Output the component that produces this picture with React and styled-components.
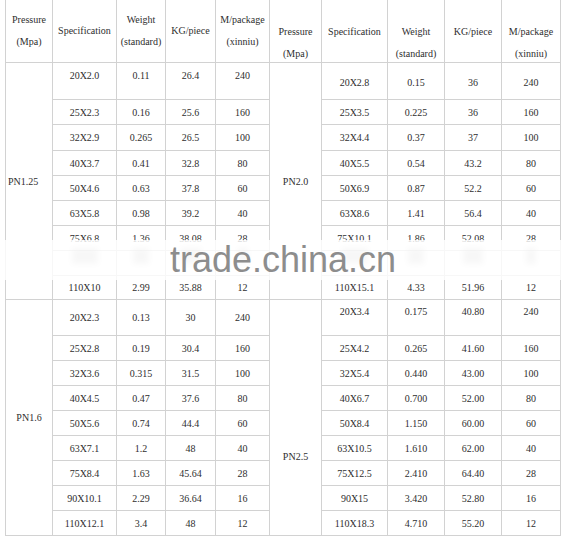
import React from "react";
import styled, { createGlobalStyle } from "styled-components";

const GlobalStyle = createGlobalStyle`
  html, body {
    margin: 0;
    padding: 0;
    background: #ffffff;
  }
  body {
    font-family: "Liberation Serif", "Times New Roman", serif;
  }
`;

const LINE = "#d2d2d2";

const Page = styled.div`
  position: relative;
  display: flex;
  padding-left: 5px;
  width: 565px;
  height: 546px;
  box-sizing: border-box;
  overflow: hidden;
  background: #ffffff;
`;

const Sheet = styled.div`
  display: grid;
  grid-template-columns: ${(p) => p.$cols};
  grid-template-rows: 63px 37px 25px 26px repeat(5, 25px) 24px 36px repeat(8, 25px);
  border-left: ${(p) => (p.$edge ? `1px solid ${LINE}` : "none")};
  align-self: flex-start;
`;

const Cell = styled.div`
  display: flex;
  align-items: center;
  justify-content: center;
  text-align: center;
  box-sizing: border-box;
  border-right: 1px solid ${LINE};
  border-bottom: 1px solid ${LINE};
  font-size: 10px;
  color: #2e2e2e;
  padding-top: ${(p) => p.$down || 0}px;
  padding-bottom: ${(p) => p.$up || 0}px;
  white-space: nowrap;
`;

const HeadCell = styled(Cell)`
  flex-direction: column;
  justify-content: ${(p) => (p.$top ? "flex-start" : "center")};
  padding-top: ${(p) => (p.$top ? 21 : 0)}px;
  line-height: 22px;
`;

const PressureCell = styled(Cell)`
  grid-row: span 9;
  justify-content: ${(p) => (p.$left ? "flex-start" : "center")};
  padding-left: ${(p) => (p.$left ? 2 : 0)}px;
`;

// blurred remains of the row hidden under the watermark band
const Smudge = styled.span`
  display: block;
  width: ${(p) => p.$w}px;
  height: 16px;
  margin-top: -14px;
  background: #9a9a9a;
  opacity: 0.45;
  filter: blur(3px);
`;

const Watermark = styled.div`
  position: absolute;
  top: 240px;
  left: 0;
  right: 0;
  height: 40px;
  background: rgba(255, 255, 255, 0.82);
  padding-left: 170px;
  font-family: "Liberation Sans", Arial, sans-serif;
  font-size: 36px;
  line-height: 40px;
  color: #8d8d8d;
`;

const headers = [
  ["Pressure", "(Mpa)"],
  ["Specification"],
  ["Weight", "(standard)"],
  ["KG/piece"],
  ["M/package", "(xinniu)"],
];

const HIDDEN = null;

const leftGroups = [
  {
    label: "PN1.25",
    left: true,
    rows: [
      ["20X2.0", "0.11", "26.4", "240"],
      ["25X2.3", "0.16", "25.6", "160"],
      ["32X2.9", "0.265", "26.5", "100"],
      ["40X3.7", "0.41", "32.8", "80"],
      ["50X4.6", "0.63", "37.8", "60"],
      ["63X5.8", "0.98", "39.2", "40"],
      ["75X6.8", "1.36", "38.08", "28"],
      HIDDEN,
      ["110X10", "2.99", "35.88", "12"],
    ],
    first: { up: 11 },
  },
  {
    label: "PN1.6",
    rows: [
      ["20X2.3", "0.13", "30", "240"],
      ["25X2.8", "0.19", "30.4", "160"],
      ["32X3.6", "0.315", "31.5", "100"],
      ["40X4.5", "0.47", "37.6", "80"],
      ["50X5.6", "0.74", "44.4", "60"],
      ["63X7.1", "1.2", "48", "40"],
      ["75X8.4", "1.63", "45.64", "28"],
      ["90X10.1", "2.29", "36.64", "16"],
      ["110X12.1", "3.4", "48", "12"],
    ],
  },
];

const rightGroups = [
  {
    label: "PN2.0",
    rows: [
      ["20X2.8", "0.15", "36", "240"],
      ["25X3.5", "0.225", "36", "160"],
      ["32X4.4", "0.37", "37", "100"],
      ["40X5.5", "0.54", "43.2", "80"],
      ["50X6.9", "0.87", "52.2", "60"],
      ["63X8.6", "1.41", "56.4", "40"],
      ["75X10.1", "1.86", "52.08", "28"],
      HIDDEN,
      ["110X15.1", "4.33", "51.96", "12"],
    ],
    first: { down: 3 },
  },
  {
    label: "PN2.5",
    drop: 78,
    rows: [
      ["20X3.4", "0.175", "40.80", "240"],
      ["25X4.2", "0.265", "41.60", "160"],
      ["32X5.4", "0.440", "43.00", "100"],
      ["40X6.7", "0.700", "52.00", "80"],
      ["50X8.4", "1.150", "60.00", "60"],
      ["63X10.5", "1.610", "62.00", "40"],
      ["75X12.5", "2.410", "64.40", "28"],
      ["90X15", "3.420", "52.80", "16"],
      ["110X18.3", "4.710", "55.20", "12"],
    ],
    first: { up: 12 },
  },
];

const smudgeWidths = [26, 16, 20, 10];

const PipeTable = ({ cols, edge, topHead, groups }) => (
  <Sheet $cols={cols} $edge={edge}>
    {headers.map((lines, i) => (
      <HeadCell key={"h" + i} $top={topHead}>
        {lines.map((l) => (
          <span key={l}>{l}</span>
        ))}
      </HeadCell>
    ))}
    {groups.map((g) =>
      g.rows.map((row, r) => (
        <React.Fragment key={g.label + r}>
          {r === 0 && (
            <PressureCell $left={g.left} $down={g.drop}>
              {g.label}
            </PressureCell>
          )}
          {row
            ? row.map((v, c) => (
                <Cell
                  key={c}
                  $up={r === 0 && g.first ? g.first.up : 0}
                  $down={r === 0 && g.first ? g.first.down : 0}
                >
                  {v}
                </Cell>
              ))
            : smudgeWidths.map((w, c) => (
                <Cell key={c}>
                  <Smudge $w={w} />
                </Cell>
              ))}
        </React.Fragment>
      ))
    )}
  </Sheet>
);

const App = () => {
  return (
    <>
      <GlobalStyle />
      <Page>
        <PipeTable
          cols="47px 64px 49px 50px 54px"
          edge
          groups={leftGroups}
        />
        <PipeTable
          cols="52px 66px 57px 57px 59px"
          topHead
          groups={rightGroups}
        />
        <Watermark>trade.china.cn</Watermark>
      </Page>
    </>
  );
};

export default App;
